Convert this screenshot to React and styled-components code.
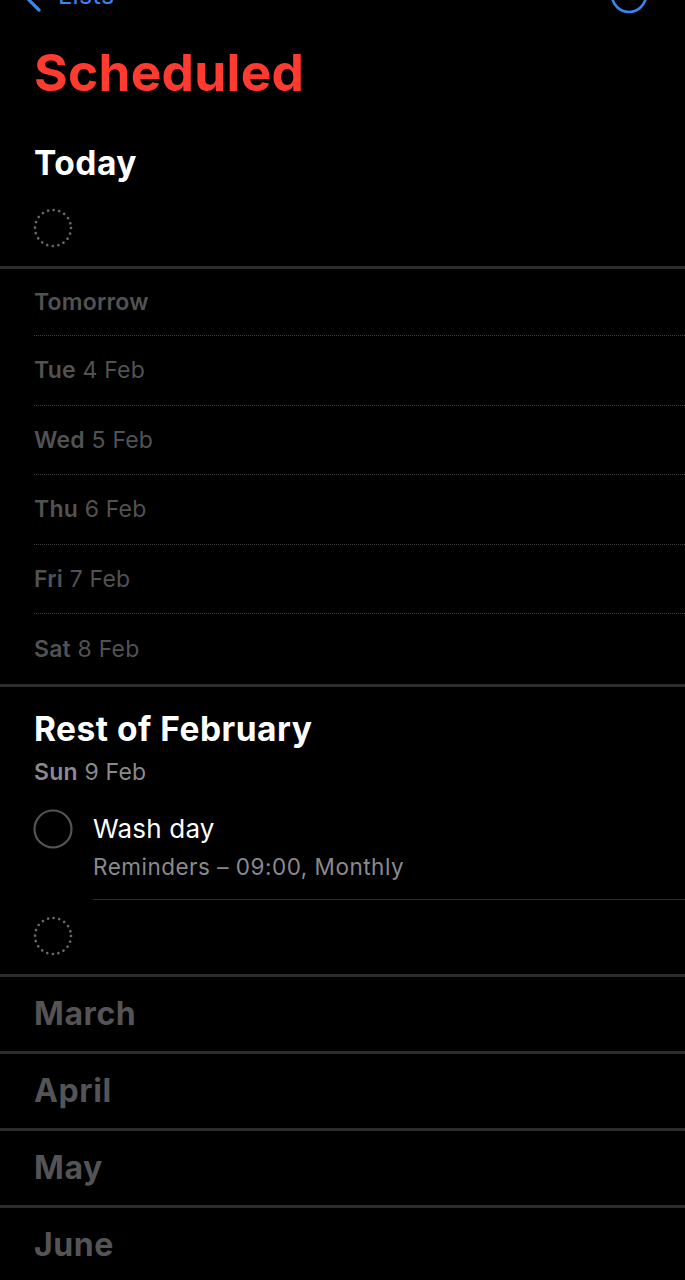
import styled, { createGlobalStyle } from "styled-components";

const GlobalStyle = createGlobalStyle`
  html, body {
    margin: 0;
    padding: 0;
    background: #000;
  }
  body {
    font-family: Inter, "Noto Sans", "Liberation Sans", sans-serif;
    -webkit-font-smoothing: antialiased;
    overflow: hidden;
  }
`;

const days = [
  { day: "Tomorrow", date: "" },
  { day: "Tue", date: "4 Feb" },
  { day: "Wed", date: "5 Feb" },
  { day: "Thu", date: "6 Feb" },
  { day: "Fri", date: "7 Feb" },
  { day: "Sat", date: "8 Feb" },
];

const months = ["March", "April", "May", "June"];

function DottedCircle() {
  return (
    <svg width="40" height="40" viewBox="0 0 40 40">
      <circle
        cx="20"
        cy="20"
        r="18"
        fill="none"
        stroke="#6a6a6c"
        strokeWidth="2.7"
        strokeLinecap="round"
        strokeDasharray="0.01 5.65"
      />
    </svg>
  );
}

function EmptyCircle() {
  return (
    <svg width="40" height="40" viewBox="0 0 40 40">
      <circle cx="20" cy="20" r="18.5" fill="none" stroke="#545456" strokeWidth="2.2" />
    </svg>
  );
}

// row heights include the dotted border, so the dotted lines land on the reference's rhythm
function dayRowHeight(i) {
  if (i === 0) return 67;
  if (i === days.length - 1) return 70;
  return 69.5;
}

export default function App() {
  return (
    <StyledPage>
      <GlobalStyle />
      <StyledNav>
        <StyledBack>
          <svg width="22" height="34" viewBox="0 0 22 34">
            <path
              d="M19 2 L4 17 L19 32"
              fill="none"
              stroke="#3a86f0"
              strokeWidth="3.2"
              strokeLinecap="round"
              strokeLinejoin="round"
            />
          </svg>
          <span>Lists</span>
        </StyledBack>
        <StyledMore>
          <svg width="40" height="40" viewBox="0 0 40 40">
            <circle cx="20" cy="20" r="17" fill="none" stroke="#3a86f0" strokeWidth="2.6" />
          </svg>
        </StyledMore>
      </StyledNav>

      <StyledTitle>Scheduled</StyledTitle>

      <StyledSectionTitle $top={41}>Today</StyledSectionTitle>
      <StyledEmptyRow $top={25}>
        <DottedCircle />
      </StyledEmptyRow>
      <StyledDivider />

      {days.map((d, i) => (
        <StyledDayRow
          key={d.day}
          $height={dayRowHeight(i)}
          $last={i === days.length - 1}
        >
          <b>{d.day}</b>
          {d.date && <span>&nbsp;{d.date}</span>}
        </StyledDayRow>
      ))}
      <StyledDivider />

      <StyledSectionTitle $top={22}>Rest of February</StyledSectionTitle>
      <StyledDayLabel>
        <b>Sun</b>&nbsp;9 Feb
      </StyledDayLabel>
      <StyledTask>
        <StyledCheck>
          <EmptyCircle />
        </StyledCheck>
        <StyledTaskBody>
          <StyledTaskName>Wash day</StyledTaskName>
          <StyledTaskMeta>Reminders – 09:00, Monthly</StyledTaskMeta>
        </StyledTaskBody>
      </StyledTask>
      <StyledEmptyRow $top={15.5}>
        <DottedCircle />
      </StyledEmptyRow>
      <StyledDivider />

      {months.map((m) => (
        <StyledMonthRow key={m}>{m}</StyledMonthRow>
      ))}
    </StyledPage>
  );
}

const StyledPage = styled.main`
  width: 685px;
  height: 1280px;
  background: #000;
  overflow: hidden;
`;

const StyledNav = styled.header`
  height: 40px;
  margin-top: -25px;
  padding: 0 36px 0 20px;
  display: flex;
  align-items: center;
  justify-content: space-between;
`;

const StyledBack = styled.div`
  display: flex;
  align-items: center;
  gap: 16px;
  color: #3a86f0;
  font-size: 25px;
  line-height: 30px;
  letter-spacing: 0.4px;
`;

const StyledMore = styled.div`
  display: flex;
`;

const StyledTitle = styled.h1`
  margin: 27px 0 0;
  padding-left: 34px;
  height: 60px;
  line-height: 60px;
  font-size: 51.5px;
  font-weight: 700;
  color: #ff3b30;
  letter-spacing: 0.2px;
`;

const StyledSectionTitle = styled.h2`
  margin: ${(p) => p.$top}px 0 0;
  padding-left: 34px;
  height: 40px;
  line-height: 40px;
  font-size: 33.5px;
  font-weight: 700;
  color: #fff;
  letter-spacing: 0.5px;
`;

const StyledEmptyRow = styled.div`
  display: flex;
  padding: ${(p) => p.$top}px 0 18px 33px;
`;

const StyledDivider = styled.hr`
  margin: 0;
  border: none;
  height: 3px;
  background: #2c2c2e;
`;

const StyledDayRow = styled.div`
  height: ${(p) => p.$height}px;
  box-sizing: border-box;
  margin-left: 34px;
  display: flex;
  align-items: center;
  line-height: 26px;
  font-size: 23px;
  letter-spacing: 0.2px;
  color: #525254;
  border-bottom: ${(p) => (p.$last ? "none" : "1px dotted #3e3e40")};

  b {
    font-weight: 600;
  }
`;

const StyledDayLabel = styled.div`
  margin-top: 9.5px;
  padding-left: 34px;
  height: 26px;
  line-height: 26px;
  font-size: 23px;
  letter-spacing: 0.2px;
  color: #8a8a8e;

  b {
    font-weight: 600;
  }
`;

const StyledTask = styled.div`
  display: flex;
  padding-left: 33px;
`;

const StyledCheck = styled.div`
  padding-top: 24.5px;
  width: 60px;
`;

const StyledTaskBody = styled.div`
  flex: 1;
  padding-top: 29px;
  padding-bottom: 19px;
  border-bottom: 1.5px solid #2c2c2e;
`;

const StyledTaskName = styled.div`
  height: 30px;
  line-height: 30px;
  font-size: 26px;
  letter-spacing: 0.2px;
  color: #fff;
`;

const StyledTaskMeta = styled.div`
  margin-top: 10.5px;
  height: 26px;
  line-height: 26px;
  font-size: 22.5px;
  letter-spacing: 0.5px;
  color: #8a8a8e;
`;

const StyledMonthRow = styled.div`
  height: 77px;
  box-sizing: border-box;
  padding-left: 34px;
  display: flex;
  align-items: center;
  line-height: 38px;
  font-size: 32px;
  font-weight: 700;
  letter-spacing: 0.6px;
  color: #545456;
  border-bottom: 3px solid #2c2c2e;
`;
